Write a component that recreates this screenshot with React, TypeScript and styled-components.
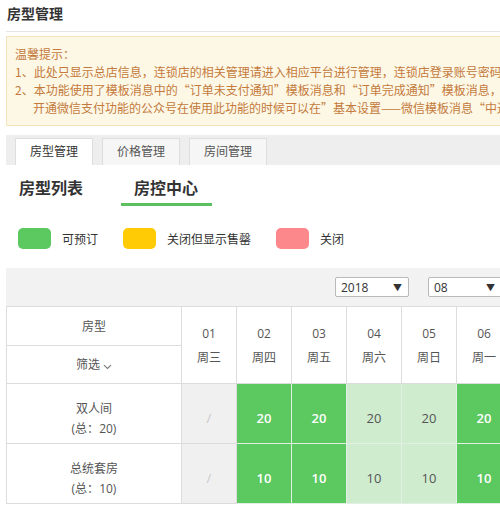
import styled, { createGlobalStyle } from 'styled-components';

const GlobalStyle = createGlobalStyle`
  html, body {
    margin: 0;
    padding: 0;
    background: #fff;
    overflow: hidden;
  }
  body {
    font-family: "Open Sans", "Noto Sans CJK SC", sans-serif;
    color: #333;
    font-size: 12px;
  }
`;

const Page = styled.div`
  width: 760px;
  padding-left: 6px;
`;

const PageTitle = styled.div`
  height: 31px;
  line-height: 28px;
  font-size: 14px;
  font-weight: 600;
  color: #333;
  border-bottom: 1px solid #e6e6e6;
  padding-left: 1px;
`;

const Notice = styled.div`
  margin-top: 4px;
  padding: 8px 8px;
  background: #fdf8e6;
  border: 1px solid #f4e4bc;
  color: #c47a3c;
  font-family: "Noto Sans CJK SC", sans-serif;
  font-size: 12px;
  line-height: 18px;
  white-space: nowrap;
`;

const NoticeIndent = styled.div`
  padding-left: 18px;
`;

const TabBar = styled.div`
  margin-top: 9px;
  height: 30px;
  background: #eeeeee;
  display: flex;
  align-items: flex-end;
  gap: 9px;
  padding-left: 9px;
`;

const Tab = styled.div<{ $active?: boolean }>`
  width: 78px;
  height: 27px;
  box-sizing: border-box;
  border: 1px solid #dedede;
  border-bottom: none;
  background: ${({ $active }) => ($active ? '#fff' : '#f6f6f6')};
  color: ${({ $active }) => ($active ? '#333' : '#555')};
  font-size: 12px;
  line-height: 26px;
  text-align: center;
`;

const SubNav = styled.div`
  display: flex;
  gap: 24px;
`;

const SubNavItem = styled.div<{ $active?: boolean }>`
  padding: 10px 14px 2px 13px;
  font-size: 16px;
  font-weight: 700;
  line-height: 26px;
  color: #333;
  border-bottom: 3px solid ${({ $active }) => ($active ? '#5cbf60' : 'transparent')};
`;

const Legend = styled.div`
  margin-top: 22px;
  display: flex;
  align-items: center;
  padding-left: 12px;
`;

const LegendItem = styled.div`
  display: flex;
  align-items: center;
  gap: 11px;
  margin-right: 25px;
  font-size: 12px;
  color: #333;
`;

const Swatch = styled.span<{ $color: string }>`
  width: 33px;
  height: 21px;
  border-radius: 5px;
  background: ${({ $color }) => $color};
`;

const Toolbar = styled.div`
  margin-top: 19px;
  height: 38px;
  background: #f2f2f2;
  display: flex;
  align-items: center;
  gap: 19px;
  padding-left: 329px;
`;

const SelectBox = styled.div`
  width: 74px;
  height: 20px;
  box-sizing: border-box;
  background: #fff;
  border: 1px solid #b9b9b9;
  border-radius: 2px;
  display: flex;
  align-items: center;
  justify-content: space-between;
  padding: 0 6px 0 5px;
  font-size: 12px;
  color: #333;
`;

const Caret = styled.span`
  font-size: 9px;
  color: #333;
`;

const Table = styled.table`
  border-collapse: collapse;
  table-layout: fixed;
  font-size: 12px;
  color: #555;
`;

const NameHead = styled.th<{ $h: number }>`
  width: 175px;
  height: ${({ $h }) => $h}px;
  box-sizing: border-box;
  font-weight: normal;
  border: 1px solid #dcdcdc;
  text-align: center;
  padding: 0;
`;

const DayHead = styled.th`
  width: 54px;
  font-weight: normal;
  border: 1px solid #dcdcdc;
  text-align: center;
  padding: 2px 0 0;
  line-height: 24px;
  color: #555;
`;

const FilterArrow = styled.span`
  display: inline-block;
  margin-left: 3px;
  vertical-align: middle;
`;

const NameCell = styled.td`
  height: 49px;
  border: 1px solid #dcdcdc;
  text-align: center;
  line-height: 20px;
  color: #555;
  padding: 10px 0 0;
`;

type Status = 'past' | 'open' | 'soft';

const DayCell = styled.td<{ $status: Status }>`
  border: 1px solid ${({ $status }) => ($status === 'past' ? '#dcdcdc' : '#e4efe4')};
  text-align: center;
  padding: 8px 0 0;
  font-size: 13px;
  background: ${({ $status }) =>
    $status === 'open' ? '#5bc860' : $status === 'soft' ? '#cfeccf' : '#f0f0f0'};
  color: ${({ $status }) =>
    $status === 'open' ? '#fff' : $status === 'soft' ? '#555' : '#c8c8c8'};
  font-weight: ${({ $status }) => ($status === 'open' ? 600 : 400)};
`;

const week = ['周日', '周一', '周二', '周三', '周四', '周五', '周六'];

// August 2018, starts on a Wednesday
const days = Array.from({ length: 10 }, (_, i) => {
  const day = i + 1;
  const weekday = (3 + i) % 7;
  let status: Status = 'open';
  if (day === 1) status = 'past';
  else if (weekday === 6 || weekday === 0) status = 'soft';
  return { label: String(day).padStart(2, '0'), week: week[weekday], status };
});

const rooms = [
  { name: '双人间', total: 20 },
  { name: '总统套房', total: 10 },
];

export default function App() {
  return (
    <Page>
      <GlobalStyle />
      <PageTitle>房型管理</PageTitle>

      <Notice>
        <div>温馨提示：</div>
        <div>1、此处只显示总店信息，连锁店的相关管理请进入相应平台进行管理，连锁店登录账号密码可在连锁店管理中查看</div>
        <div>2、本功能使用了模板消息中的“订单未支付通知”模板消息和“订单完成通知”模板消息，如需使用请先</div>
        <NoticeIndent>开通微信支付功能的公众号在使用此功能的时候可以在”基本设置——微信模板消息“中进行设置</NoticeIndent>
      </Notice>

      <TabBar>
        <Tab $active>房型管理</Tab>
        <Tab>价格管理</Tab>
        <Tab>房间管理</Tab>
      </TabBar>

      <SubNav>
        <SubNavItem>房型列表</SubNavItem>
        <SubNavItem $active>房控中心</SubNavItem>
      </SubNav>

      <Legend>
        <LegendItem>
          <Swatch $color="#5bc860" />
          可预订
        </LegendItem>
        <LegendItem>
          <Swatch $color="#ffcb05" />
          关闭但显示售罄
        </LegendItem>
        <LegendItem>
          <Swatch $color="#fd888c" />
          关闭
        </LegendItem>
      </Legend>

      <Toolbar>
        <SelectBox>
          2018<Caret>▼</Caret>
        </SelectBox>
        <SelectBox>
          08<Caret>▼</Caret>
        </SelectBox>
      </Toolbar>

      <Table>
        <thead>
          <tr>
            <NameHead $h={39}>房型</NameHead>
            {days.map(d => (
              <DayHead key={d.label} rowSpan={2}>
                {d.label}
                <br />
                {d.week}
              </DayHead>
            ))}
          </tr>
          <tr>
            <NameHead $h={38}>
              筛选
              <FilterArrow>
                <svg width="9" height="6" viewBox="0 0 9 6">
                  <path d="M1 1.2 L4.5 4.5 L8 1.2" fill="none" stroke="#777" strokeWidth="1.1" />
                </svg>
              </FilterArrow>
            </NameHead>
          </tr>
        </thead>
        <tbody>
          {rooms.map(room => (
            <tr key={room.name}>
              <NameCell>
                {room.name}
                <br />
                (总：{room.total})
              </NameCell>
              {days.map(d => (
                <DayCell key={d.label} $status={d.status}>
                  {d.status === 'past' ? '/' : room.total}
                </DayCell>
              ))}
            </tr>
          ))}
        </tbody>
      </Table>
    </Page>
  );
}
